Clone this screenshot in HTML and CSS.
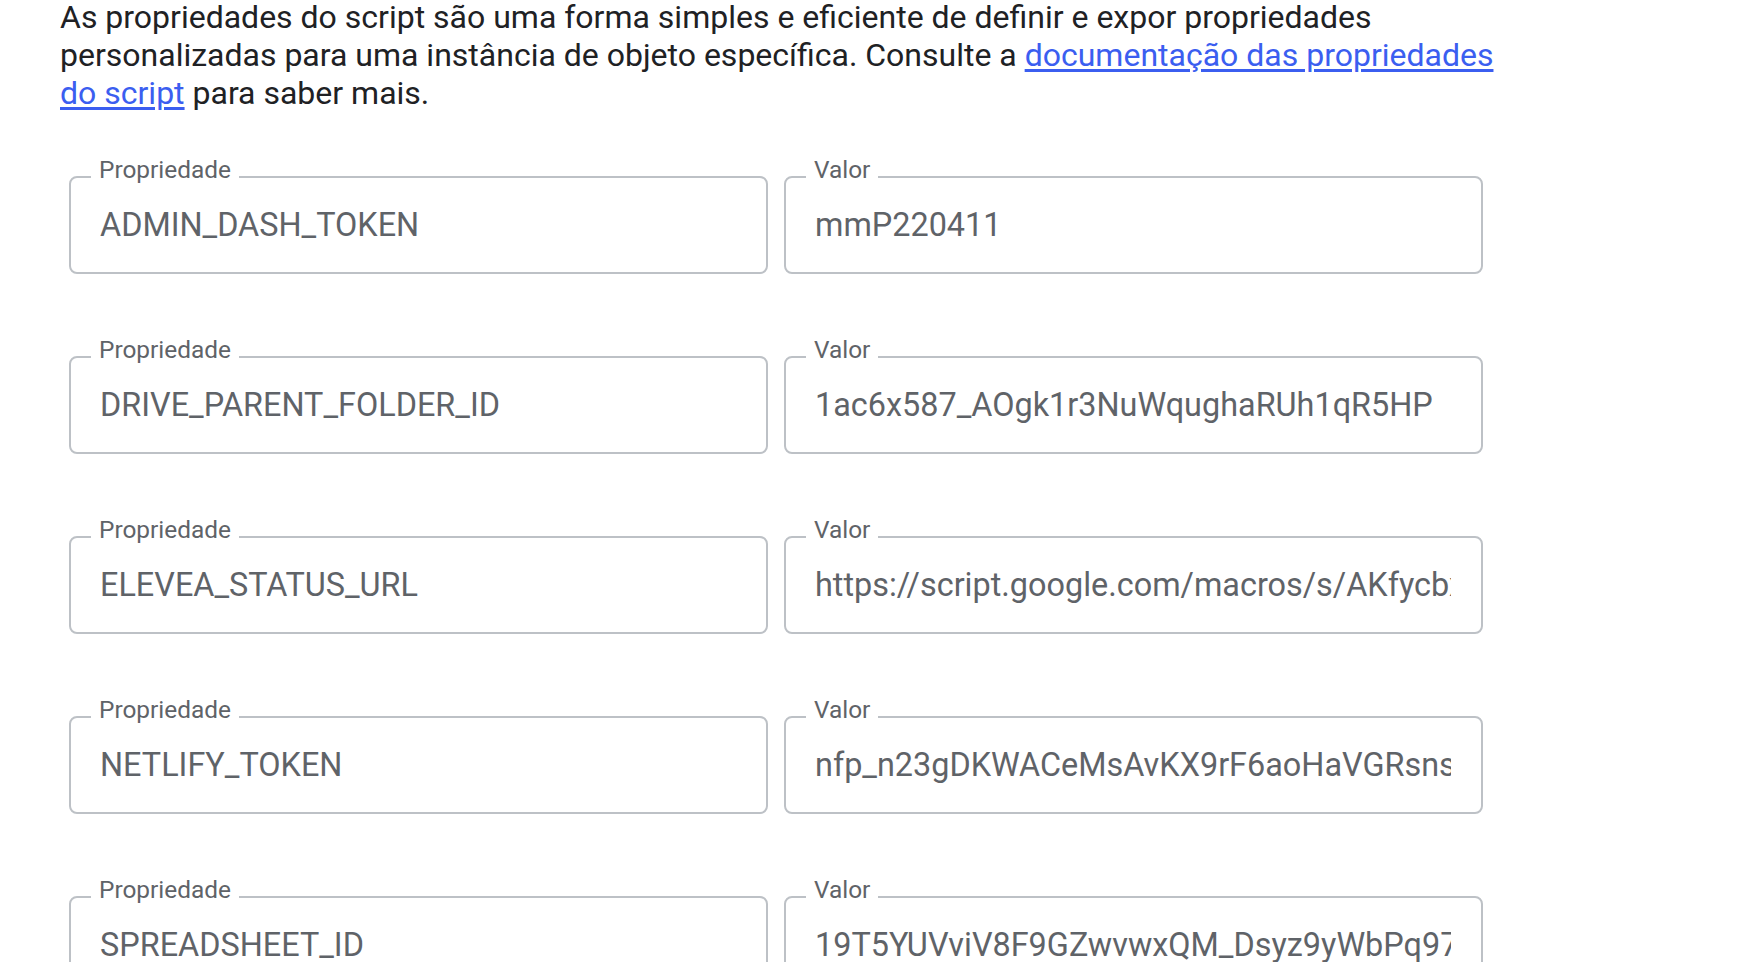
FILE: index.html
```html
<!DOCTYPE html>
<html lang="pt">
<head>
<meta charset="utf-8">
<link rel="stylesheet" href="styles.css">
</head>
<body>
<main class="page">
  <p class="intro">As propriedades do script são uma forma simples e eficiente de definir e expor propriedades personalizadas para uma instância de objeto específica. Consulte a <a href="#" class="link">documentação das propriedades do script</a> para saber mais.</p>
  <div class="props">
    <div class="row">
      <div class="field"><span class="label">Propriedade</span><span class="value">ADMIN_DASH_TOKEN</span></div>
      <div class="field"><span class="label">Valor</span><span class="value">mmP220411</span></div>
    </div>
    <div class="row">
      <div class="field"><span class="label">Propriedade</span><span class="value">DRIVE_PARENT_FOLDER_ID</span></div>
      <div class="field"><span class="label">Valor</span><span class="value">1ac6x587_AOgk1r3NuWqughaRUh1qR5HP</span></div>
    </div>
    <div class="row">
      <div class="field"><span class="label">Propriedade</span><span class="value">ELEVEA_STATUS_URL</span></div>
      <div class="field"><span class="label">Valor</span><span class="value">https://script.google.com/macros/s/AKfycbxQ7pR2mL9vT4wE8nK3sJ6hF1gD5aZ0</span></div>
    </div>
    <div class="row">
      <div class="field"><span class="label">Propriedade</span><span class="value">NETLIFY_TOKEN</span></div>
      <div class="field"><span class="label">Valor</span><span class="value">nfp_n23gDKWACeMsAvKX9rF6aoHaVGRsnsT8kLm2</span></div>
    </div>
    <div class="row">
      <div class="field"><span class="label">Propriedade</span><span class="value">SPREADSHEET_ID</span></div>
      <div class="field"><span class="label">Valor</span><span class="value">19T5YUVviV8F9GZwvwxQM_Dsyz9yWbPq97xL</span></div>
    </div>
  </div>
</main>
</body>
</html>
```

FILE: styles.css
```css
html, body {
  margin: 0;
  padding: 0;
  background: #ffffff;
}

body {
  font-family: Roboto, "Liberation Sans", Arial, sans-serif;
  overflow: hidden;
}

.page {
  padding: 0 0 0 60px;
}

.intro {
  margin: -2px 0 0 0;
  width: 1450px;
  font-size: 32px;
  line-height: 38px;
  color: #202124;
}

.link {
  color: #3b5ef0;
  text-decoration: underline;
  text-underline-offset: 3px;
}

.props {
  margin: 64px 0 0 9px;
  display: flex;
  flex-direction: column;
  gap: 82px;
  width: 1414px;
}

.row {
  display: grid;
  grid-template-columns: minmax(0, 1fr) minmax(0, 1fr);
  gap: 16px;
}

.field {
  position: relative;
  box-sizing: border-box;
  height: 98px;
  min-width: 0;
  border: 2px solid #bdc1c6;
  border-radius: 8px;
  padding: 0 30px 0 29px;
  display: flex;
  align-items: center;
}

.label {
  position: absolute;
  left: 20px;
  top: -22px;
  padding: 0 8px;
  background: #ffffff;
  font-size: 24.4px;
  line-height: 28px;
  color: #5f6368;
}

.value {
  display: block;
  width: 100%;
  min-width: 0;
  overflow: hidden;
  white-space: nowrap;
  font-size: 32.4px;
  line-height: 40px;
  color: #5f6368;
}
```
